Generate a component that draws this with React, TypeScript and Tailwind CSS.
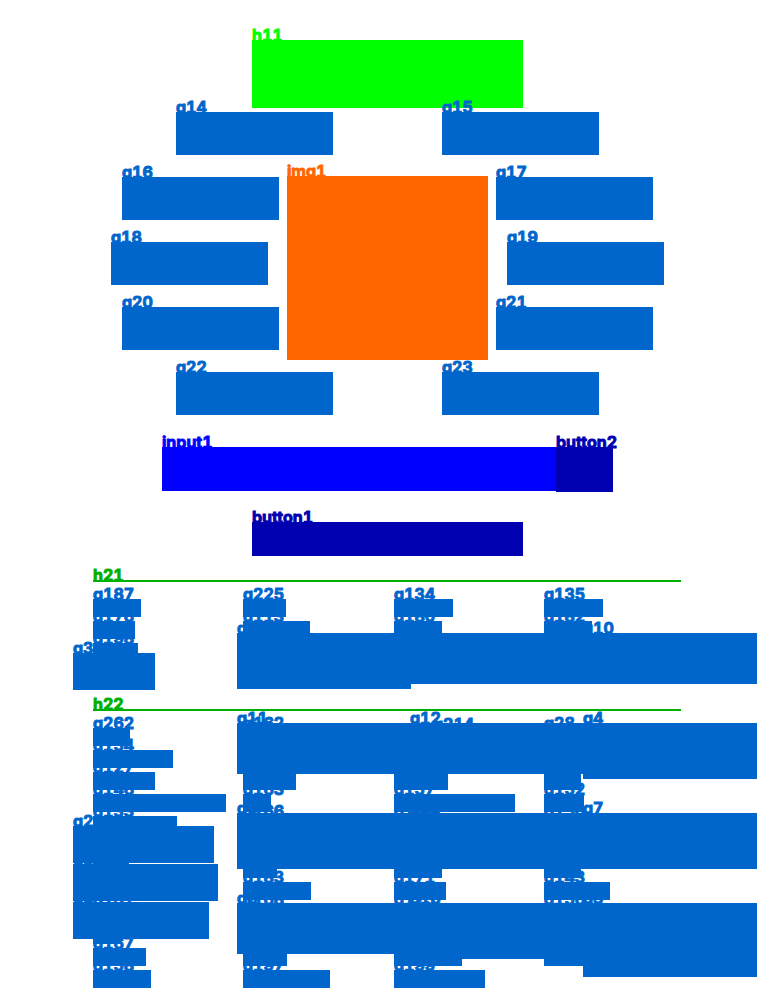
type RegionProps = {
    label: string;
    className: string;
    bg?: string;
    fg?: string;
};

// One annotated region: its name sits behind the top edge of its own box
function Region({ label, className, bg = "bg-[#0066cc]", fg = "text-[#0066cc]" }: RegionProps) {
    return (
        <div className={`relative shrink-0 ${className}`}>
            <span className={`absolute left-0 -top-[13px] text-[16px] leading-[16px] font-bold tabular-nums whitespace-nowrap [-webkit-text-stroke:0.9px_currentColor] ${fg}`}>
                {label}
            </span>
            <div className={`absolute inset-0 ${bg}`} />
        </div>
    );
}

const GREEN_LINE = { bg: "bg-[#00b000]", fg: "text-[#00b000]" };
const DARK = { bg: "bg-[#0000b0]", fg: "text-[#0000b0]" };

// [label, width class] for each small row in a column
type Row = [string, string];

const list1: Row[][] = [
    [["g187", "w-[48px]"], ["g176", "w-[42px]"], ["g198", "w-[45px]"]],
    [["g225", "w-[43px]"], ["g113", "w-[67px]"]],
    [["g134", "w-[59px]"], ["g180", "w-[48px]"]],
    [["g135", "w-[59px]"], ["g182", "w-[48px]"]],
];

const list2: Row[][] = [
    [
        ["g262", "w-[37px]"], ["g154", "w-[80px]"], ["g127", "w-[62px]"], ["g146", "w-[133px]"],
        ["g133", "w-[84px]"], ["g138", "w-[28px]"], ["g155", "w-[36px]"], ["g129", "w-[28px]"],
        ["g131", "w-[36px]"], ["g139", "w-[28px]"], ["g167", "w-[53px]"], ["g158", "w-[58px]"],
    ],
    [
        ["g162", "w-[57px]"], ["g149", "w-[40px]"], ["g173", "w-[53px]"], ["g163", "w-[28px]"],
        ["g166", "w-[57px]"], ["g148", "w-[57px]"], ["g179", "w-[34px]"], ["g183", "w-[68px]"],
        ["g168", "w-[40px]"], ["g186", "w-[40px]"], ["g188", "w-[44px]"], ["g197", "w-[87px]"],
    ],
    [
        ["g140", "w-[40px]"], ["g151", "w-[54px]"], ["g157", "w-[121px]"], ["g144", "w-[40px]"],
        ["g145", "w-[40px]"], ["g170", "w-[48px]"], ["g171", "w-[52px]"], ["g175", "w-[40px]"],
        ["g177", "w-[40px]"], ["g172", "w-[68px]"], ["g199", "w-[91px]"],
    ],
    [
        ["g28", "w-[37px]"], ["g141", "w-[30px]"], ["g222", "w-[37px]"], ["g152", "w-[40px]"],
        ["g150", "w-[30px]"], ["g153", "w-[30px]"], ["g147", "w-[37px]"], ["g143", "w-[66px]"],
        ["g156", "w-[30px]"], ["g159", "w-[30px]"], ["g174", "w-[39px]"],
    ],
];

function Columns({ cols }: { cols: Row[][] }) {
    return (
        <div className="grid grid-cols-[150px_151px_150px_auto] pl-[93px] pt-[17px]">
            {cols.map((col, i) => (
                <div key={i} className={`flex flex-col items-start gap-1 ${cols === list2 && i === 2 ? "pt-[22px]" : ""}`}>
                    {col.map(([label, w]) => (
                        <Region key={label} label={label} className={`h-[18px] ${w}`} />
                    ))}
                </div>
            ))}
        </div>
    );
}

export default function App() {
    return (
        <div className="h-[989px] w-[774px] overflow-hidden bg-white font-['Inter',sans-serif]">
            {/* top cluster, centred on x = 387.5 */}
            <div className="flex w-[775px] flex-col items-center pt-[40px]">
                <Region label="h11" bg="bg-[#00ff00]" fg="text-[#00ff00]" className="h-[68px] w-[271px]" />
                <div className="mt-1 flex gap-[109px]">
                    <Region label="g14" className="h-[43px] w-[157px]" />
                    <Region label="g15" className="h-[43px] w-[157px]" />
                </div>
                <div className="mt-[21px] flex items-start gap-2">
                    <div className="flex w-[168px] flex-col items-end gap-[22px] pt-px">
                        <Region label="g16" className="h-[43px] w-[157px]" />
                        <Region label="g18" className="mr-[11px] h-[43px] w-[157px]" />
                        <Region label="g20" className="h-[43px] w-[157px]" />
                    </div>
                    <Region label="img1" bg="bg-[#ff6600]" fg="text-[#ff6600]" className="h-[184px] w-[201px]" />
                    <div className="flex w-[168px] flex-col items-start gap-[22px] pt-px">
                        <Region label="g17" className="h-[43px] w-[157px]" />
                        <Region label="g19" className="ml-[11px] h-[43px] w-[157px]" />
                        <Region label="g21" className="h-[43px] w-[157px]" />
                    </div>
                </div>
                <div className="mt-3 flex gap-[109px]">
                    <Region label="g22" className="h-[43px] w-[157px]" />
                    <Region label="g23" className="h-[43px] w-[157px]" />
                </div>
                <div className="mt-8 flex items-start">
                    <Region label="input1" bg="bg-[#0000ff]" fg="text-[#0000ff]" className="h-[44px] w-[394px]" />
                    <Region label="button2" {...DARK} className="h-[45px] w-[57px]" />
                </div>
                <div className="mt-[30px]">
                    <Region label="button1" {...DARK} className="h-[34px] w-[271px]" />
                </div>
            </div>

            {/* h21 block */}
            <div className="relative mt-6">
                <div className="pl-[93px]">
                    <Region label="h21" {...GREEN_LINE} className="h-[2px] w-[588px]" />
                </div>
                <Columns cols={list1} />
                <div className="absolute left-[73px] top-[73px]">
                    <Region label="g3" className="h-[37px] w-[82px]" />
                </div>
                <div className="absolute left-[237px] top-[53px] flex items-start">
                    <Region label="g9" className="h-[56px] w-[174px]" />
                    <Region label="g11" className="h-[51px] w-[172px]" />
                    <Region label="g10" className="h-[51px] w-[174px]" />
                </div>
            </div>

            {/* h22 block */}
            <div className="relative mt-[48px]">
                <div className="pl-[93px]">
                    <Region label="h22" {...GREEN_LINE} className="h-[2px] w-[588px]" />
                </div>
                <Columns cols={list2} />
                <div className="absolute left-[73px] top-[117px] flex flex-col items-start gap-px">
                    <Region label="g2" className="h-[37px] w-[141px]" />
                    <Region label="g5" className="h-[37px] w-[145px]" />
                    <Region label="g1" className="h-[37px] w-[136px]" />
                </div>
                <div className="absolute left-[237px] top-[14px] flex flex-col gap-[34px]">
                    <div className="flex items-start">
                        <Region label="g11" className="h-[51px] w-[173px]" />
                        <Region label="g12" className="h-[51px] w-[173px]" />
                        <Region label="g4" className="h-[56px] w-[174px]" />
                    </div>
                    <div className="flex items-start">
                        <Region label="g6" className="h-[56px] w-[173px]" />
                        <Region label="g13" className="h-[56px] w-[173px]" />
                        <Region label="g7" className="h-[56px] w-[174px]" />
                    </div>
                    <div className="flex items-start">
                        <Region label="g8" className="h-[51px] w-[173px]" />
                        <Region label="g15" className="h-[56px] w-[173px]" />
                        <Region label="g3" className="h-[74px] w-[174px]" />
                    </div>
                </div>
                <div className="absolute left-[433px] top-[20px]">
                    <Region label="g214" className="h-[18px] w-[67px]" />
                </div>
            </div>
        </div>
    );
}
